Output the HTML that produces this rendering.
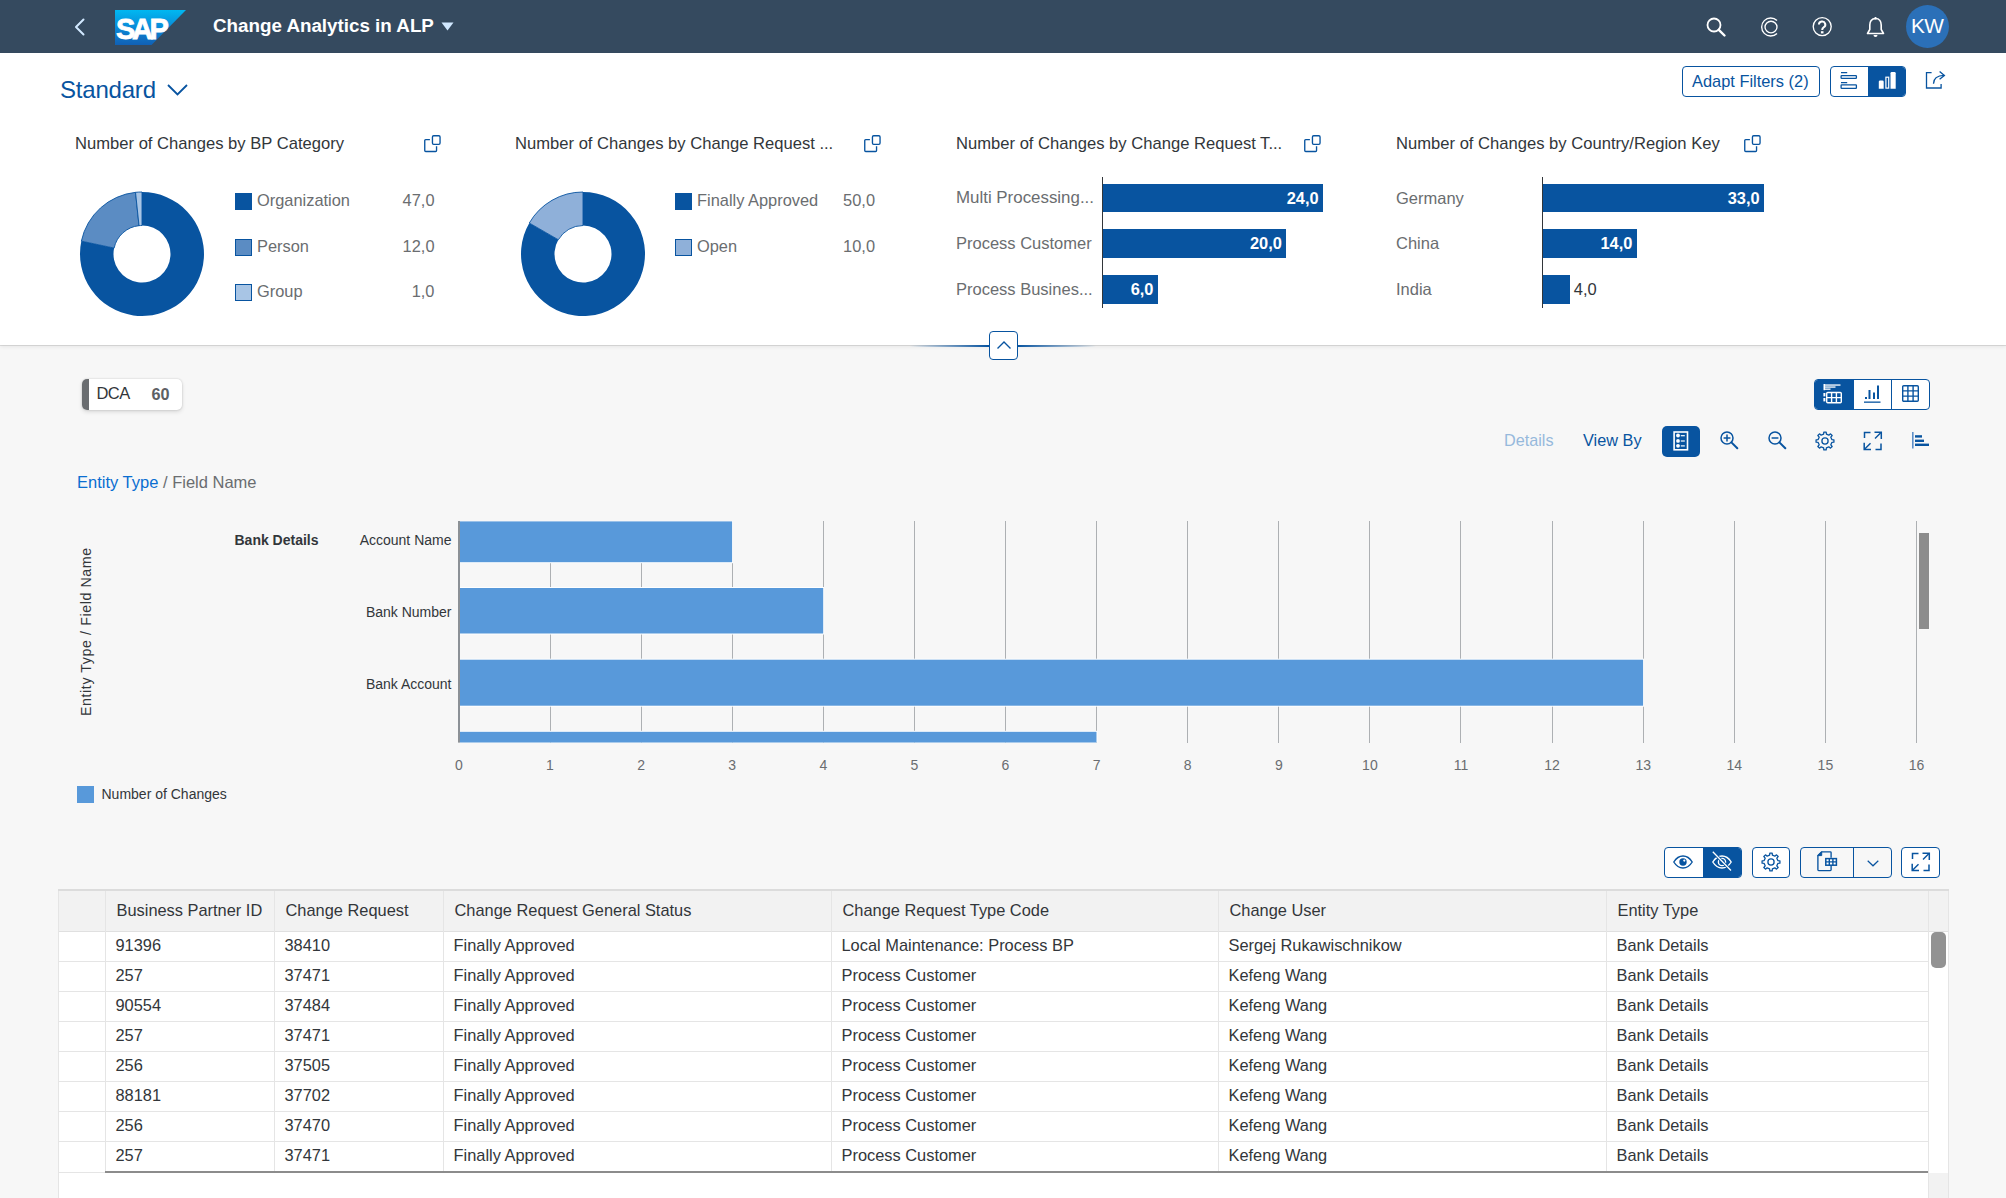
<!DOCTYPE html>
<html><head><meta charset="utf-8">
<style>
*{box-sizing:border-box;margin:0;padding:0}
html,body{width:2006px;height:1198px;overflow:hidden;background:#f7f7f7;font-family:"Liberation Sans",sans-serif;color:#32363a}
.a{position:absolute}
.t{position:absolute;white-space:nowrap;line-height:1}
#shell{left:0;top:0;width:2006px;height:53px;background:#354a5f}
#hdr{left:0;top:53px;width:2006px;height:292px;background:#fff;box-shadow:0 0.5px 0.5px rgba(0,0,0,0.1),0 2px 4px rgba(0,0,0,0.07)}
.btn{position:absolute;border:1px solid #0854a0;border-radius:4px;background:#fff}
.ttl{font-size:16.6px;color:#32363a}
.lg{font-size:16.4px;color:#6a6d70}
.sq{position:absolute;width:17px;height:17px;border:1px solid #0854a0}
.bl{font-size:16.5px;color:#6a6d70}
.bv{font-size:16.4px;color:#fff;font-weight:bold}
.ax{position:absolute;width:1px;background:#32363a}
.bar{position:absolute;background:#0854a0}
svg{position:absolute;overflow:visible}
</style></head><body>
<!-- SHELL BAR -->
<div id="shell" class="a">
  <svg style="left:74px;top:18px" width="11" height="18" viewBox="0 0 11 18"><path d="M9.5 1.5 L2 9 L9.5 16.5" fill="none" stroke="#d1e8ff" stroke-width="2" stroke-linecap="round" stroke-linejoin="round"/></svg>
  <svg style="left:115px;top:10px" width="72" height="36" viewBox="0 0 72 36">
    <defs><linearGradient id="sapg" x1="0" y1="0" x2="0" y2="1"><stop offset="0" stop-color="#00b8f1"/><stop offset="0.5" stop-color="#0a8ad8"/><stop offset="1" stop-color="#1160b4"/></linearGradient></defs>
    <path d="M0 0 H71 L36.5 35 H0 Z" fill="url(#sapg)"/>
    <text x="1" y="29.2" font-family="Liberation Sans" font-weight="bold" font-size="29" fill="#fff" stroke="#fff" stroke-width="0.8" letter-spacing="-3.4">SAP</text>
  </svg>
  <div class="t" style="left:213px;top:17px;font-size:18.8px;font-weight:bold;color:#fff">Change Analytics in ALP</div>
  <svg style="left:441px;top:22px" width="13" height="9" viewBox="0 0 13 9"><path d="M0.5 0.5 H12.5 L6.5 8.5 Z" fill="#d1e8ff"/></svg>
  <!-- search -->
  <svg style="left:1706px;top:17px" width="20" height="20" viewBox="0 0 20 20"><circle cx="8" cy="8" r="6.5" fill="none" stroke="#fff" stroke-width="1.8"/><path d="M12.8 12.8 L18.5 18.5" stroke="#fff" stroke-width="2.4" stroke-linecap="round"/></svg>
  <!-- copilot-like -->
  <svg style="left:1760px;top:17px" width="20" height="20" viewBox="0 0 20 20"><path d="M17 3.6 A9 9 0 1 0 17 16.4" fill="none" stroke="#fff" stroke-width="1.35"/><ellipse cx="11" cy="10" rx="6" ry="5.8" fill="none" stroke="#fff" stroke-width="1.35"/></svg>
  <!-- help -->
  <svg style="left:1812px;top:17px" width="20" height="20" viewBox="0 0 20 20"><circle cx="10.2" cy="9.6" r="9" fill="none" stroke="#fff" stroke-width="1.35"/><path d="M6.9 7.6 A3.2 3.1 0 1 1 11.6 10.4 C10.6 11 10.2 11.5 10.2 13" fill="none" stroke="#fff" stroke-width="2"/><rect x="8.9" y="14.2" width="2.6" height="2.2" fill="#fff"/></svg>
  <!-- bell -->
  <svg style="left:1866px;top:17px" width="19" height="21" viewBox="0 0 19 21"><path d="M9.5 1.5 C5.5 1.5 3.8 4.5 3.8 8 V12.5 L1.5 16.5 H17.5 L15.2 12.5 V8 C15.2 4.5 13.5 1.5 9.5 1.5 Z" fill="none" stroke="#fff" stroke-width="1.6" stroke-linejoin="round"/><path d="M7.5 18 A2 2 0 0 0 11.5 18 Z" fill="#fff"/><rect x="8.6" y="0" width="1.8" height="2.5" fill="#fff"/></svg>
  <div class="a" style="left:1906px;top:5px;width:43px;height:43px;border-radius:50%;background:#2b70b8"></div>
  <div class="t" style="left:1911px;top:16.4px;font-size:20.8px;color:#fff;letter-spacing:-0.7px">KW</div>
</div>

<!-- HEADER -->
<div id="hdr" class="a"></div>
<div class="t" style="left:60px;top:77.6px;font-size:24px;letter-spacing:-0.2px;color:#0854a0">Standard</div>
<svg style="left:167px;top:84px" width="21" height="12" viewBox="0 0 21 12"><path d="M1 1 L10.5 10.5 L20 1" fill="none" stroke="#0854a0" stroke-width="1.8"/></svg>
<div class="btn" style="left:1682px;top:66px;width:138px;height:31px"></div>
<div class="t" style="left:1692px;top:73px;font-size:16.4px;color:#0854a0">Adapt Filters (2)</div>
<div class="btn" style="left:1830px;top:66px;width:76px;height:31px;overflow:hidden"><div class="a" style="left:37px;top:0;width:39px;height:31px;background:#0854a0"></div></div>
<svg style="left:1836px;top:68px" width="24" height="24" viewBox="1836 68 24 24"><g fill="none" stroke="#0854a0" stroke-width="1.3"><path d="M1841 72.6 H1847.2 M1841 82.6 H1847.2"/><rect x="1841.1" y="75.6" width="15.3" height="2.7" rx="0.6"/><rect x="1841.1" y="84.9" width="15.3" height="3.4" rx="0.6"/></g></svg>
<svg style="left:1874px;top:68px" width="26" height="24" viewBox="1874 68 26 24"><g fill="#fff"><path d="M1878.8 88.7 V81.8 Q1878.8 80.5 1880.1 80.5 H1882.4 Q1883.7 80.5 1883.7 81.8 V88.7 Z"/><path d="M1890.5 88.7 V73.2 Q1890.5 72 1891.7 72 H1894.5 Q1895.7 72 1895.7 73.2 V88.7 Z"/></g><rect x="1885.9" y="77.2" width="2.8" height="10.9" fill="none" stroke="#fff" stroke-width="1.2"/></svg>
<svg style="left:1922px;top:68px" width="26" height="24" viewBox="1922 68 26 24"><g fill="none" stroke="#0854a0" stroke-width="1.3"><path d="M1931.6 72.7 H1926.5 V88 H1941.1 V84"/><path d="M1933.5 83.8 C1933.5 78.5 1937 75.6 1944.2 75.4"/><path d="M1939.6 71.5 L1944.4 75.4 L1939.6 79.2"/></g></svg>

<!-- CHART CARDS -->
<div class="t ttl" style="left:75px;top:135.6px;">Number of Changes by BP Category</div>
<svg style="left:424px;top:135px" width="17" height="17" viewBox="0 0 17 17"><path d="M5.9 4.6 H1.7 Q0.75 4.6 0.75 5.6 V15.6 Q0.75 16.5 1.7 16.5 H11.6 Q12.55 16.5 12.55 15.6 V11.2" fill="none" stroke="#0854a0" stroke-width="1.35"/><rect x="8.45" y="0.7" width="7.6" height="8.6" rx="1.2" fill="none" stroke="#0854a0" stroke-width="1.35"/></svg>
<div class="t ttl" style="left:515px;top:135.6px;">Number of Changes by Change Request ...</div>
<svg style="left:864px;top:135px" width="17" height="17" viewBox="0 0 17 17"><path d="M5.9 4.6 H1.7 Q0.75 4.6 0.75 5.6 V15.6 Q0.75 16.5 1.7 16.5 H11.6 Q12.55 16.5 12.55 15.6 V11.2" fill="none" stroke="#0854a0" stroke-width="1.35"/><rect x="8.45" y="0.7" width="7.6" height="8.6" rx="1.2" fill="none" stroke="#0854a0" stroke-width="1.35"/></svg>
<div class="t ttl" style="left:956px;top:135.6px;">Number of Changes by Change Request T...</div>
<svg style="left:1304px;top:135px" width="17" height="17" viewBox="0 0 17 17"><path d="M5.9 4.6 H1.7 Q0.75 4.6 0.75 5.6 V15.6 Q0.75 16.5 1.7 16.5 H11.6 Q12.55 16.5 12.55 15.6 V11.2" fill="none" stroke="#0854a0" stroke-width="1.35"/><rect x="8.45" y="0.7" width="7.6" height="8.6" rx="1.2" fill="none" stroke="#0854a0" stroke-width="1.35"/></svg>
<div class="t ttl" style="left:1396px;top:135.6px;">Number of Changes by Country/Region Key</div>
<svg style="left:1744px;top:135px" width="17" height="17" viewBox="0 0 17 17"><path d="M5.9 4.6 H1.7 Q0.75 4.6 0.75 5.6 V15.6 Q0.75 16.5 1.7 16.5 H11.6 Q12.55 16.5 12.55 15.6 V11.2" fill="none" stroke="#0854a0" stroke-width="1.35"/><rect x="8.45" y="0.7" width="7.6" height="8.6" rx="1.2" fill="none" stroke="#0854a0" stroke-width="1.35"/></svg>
<svg style="left:78px;top:190px" width="128" height="128" viewBox="0 0 128 128"><path d="M64.00 2.00 A62 62 0 1 1 3.35 51.11 L36.12 58.07 A28.5 28.5 0 1 0 64.00 35.50 Z" fill="#0854a0"/><path d="M3.35 51.11 A62 62 0 0 1 57.52 2.34 L61.02 35.66 A28.5 28.5 0 0 0 36.12 58.07 Z" fill="#5b8cc3" stroke="#0854a0" stroke-width="0.9"/><path d="M57.52 2.34 A62 62 0 0 1 64.00 2.00 L64.00 35.50 A28.5 28.5 0 0 0 61.02 35.66 Z" fill="#a8c5e5" stroke="#0854a0" stroke-width="0.9"/></svg>
<svg style="left:519px;top:190px" width="128" height="128" viewBox="0 0 128 128"><path d="M64.00 2.00 A62 62 0 1 1 10.31 33.00 L39.32 49.75 A28.5 28.5 0 1 0 64.00 35.50 Z" fill="#0854a0"/><path d="M10.31 33.00 A62 62 0 0 1 64.00 2.00 L64.00 35.50 A28.5 28.5 0 0 0 39.32 49.75 Z" fill="#8fb0d9" stroke="#0854a0" stroke-width="0.9"/></svg>
<div class="sq" style="left:235px;top:193.0px;background:#0854a0"></div>
<div class="t lg" style="left:257px;top:192.0px;">Organization</div>
<div class="t lg" style="right:1571.5px;top:192.0px;">47,0</div>
<div class="sq" style="left:235px;top:238.5px;background:#5b8cc3"></div>
<div class="t lg" style="left:257px;top:237.5px;">Person</div>
<div class="t lg" style="right:1571.5px;top:237.5px;">12,0</div>
<div class="sq" style="left:235px;top:284.0px;background:#a8c5e5"></div>
<div class="t lg" style="left:257px;top:283.0px;">Group</div>
<div class="t lg" style="right:1571.5px;top:283.0px;">1,0</div>
<div class="sq" style="left:675px;top:193.0px;background:#0854a0"></div>
<div class="t lg" style="left:697px;top:192.0px;">Finally Approved</div>
<div class="t lg" style="right:1131px;top:192.0px;">50,0</div>
<div class="sq" style="left:675px;top:238.5px;background:#8fb0d9"></div>
<div class="t lg" style="left:697px;top:237.5px;">Open</div>
<div class="t lg" style="right:1131px;top:237.5px;">10,0</div>
<div class="ax" style="left:1102px;top:177px;height:131px"></div>
<div class="bar" style="left:1103px;top:184.0px;width:220.1px;height:27.5px"></div>
<div class="t bl" style="left:956px;top:189.5px;font-size:16.9px">Multi Processing...</div>
<div class="t bv" style="right:687.4000000000001px;top:190.3px;">24,0</div>
<div class="bar" style="left:1103px;top:229.0px;width:183.4px;height:28.5px"></div>
<div class="t bl" style="left:956px;top:234.5px;">Process Customer</div>
<div class="t bv" style="right:724.0999999999999px;top:235.3px;">20,0</div>
<div class="bar" style="left:1103px;top:275.0px;width:55.0px;height:28.5px"></div>
<div class="t bl" style="left:956px;top:280.5px;">Process Busines...</div>
<div class="t bv" style="right:852.5px;top:281.3px;">6,0</div>
<div class="ax" style="left:1542px;top:177px;height:131px"></div>
<div class="bar" style="left:1543px;top:184.0px;width:221.1px;height:27.5px"></div>
<div class="t bl" style="left:1396px;top:189.5px;">Germany</div>
<div class="t bv" style="right:246.4000000000001px;top:190.3px;">33,0</div>
<div class="bar" style="left:1543px;top:229.0px;width:93.8px;height:28.5px"></div>
<div class="t bl" style="left:1396px;top:234.5px;">China</div>
<div class="t bv" style="right:373.70000000000005px;top:235.3px;">14,0</div>
<div class="bar" style="left:1543px;top:275.0px;width:26.8px;height:28.5px"></div>
<div class="t bl" style="left:1396px;top:280.5px;">India</div>
<div class="t bl" style="left:1573.8px;top:281.3px;color:#32363a">4,0</div>

<!-- COLLAPSE BAR -->
<div class="a" style="left:910px;top:344.5px;width:186px;height:2px;background:linear-gradient(90deg,rgba(8,84,160,0),#0854a0 42%,#0854a0 58%,rgba(8,84,160,0))"></div>
<div class="btn" style="left:989px;top:331px;width:29px;height:29px"></div>
<svg style="left:996px;top:340px" width="16" height="10" viewBox="0 0 16 10"><path d="M1.5 8.5 L8 2 L14.5 8.5" fill="none" stroke="#0854a0" stroke-width="1.4"/></svg>

<div class="a" style="left:82px;top:379px;width:100px;height:31px;background:#fff;border-radius:5px;box-shadow:0 0 2px rgba(0,0,0,0.18),0 2px 4px rgba(0,0,0,0.12);overflow:hidden"><div class="a" style="left:0;top:0;width:7px;height:31px;background:#6a6d70"></div></div>
<div class="t" style="left:96.5px;top:385px;font-size:16.5px;letter-spacing:-0.6px;color:#32363a">DCA</div>
<div class="t" style="left:151.5px;top:386px;font-size:16.2px;font-weight:bold;color:#5d6064">60</div>
<div class="btn" style="left:1814px;top:379px;width:116px;height:31px;overflow:hidden"><div class="a" style="left:0;top:0;width:39px;height:31px;background:#0854a0"></div><div class="a" style="left:76px;top:0;width:1px;height:31px;background:#0854a0"></div></div>
<svg style="left:1823px;top:384px" width="20" height="20" viewBox="0 0 20 20"><g fill="#fff"><rect x="0.5" y="0" width="1.6" height="6.2"/><rect x="2" y="0.4" width="15.5" height="1.3"/><rect x="2" y="2.4" width="10.5" height="1.3"/><rect x="2" y="4.5" width="5.5" height="1.3"/></g><g fill="none" stroke="#fff" stroke-width="1.4"><rect x="3.7" y="8.5" width="14.6" height="10.3" rx="1"/><path d="M3.7 13.6 H18.3 M8.6 8.5 V18.8 M13.4 8.5 V18.8"/></g><rect x="0.4" y="9" width="2" height="3.4" fill="#fff"/><rect x="0.4" y="14" width="2" height="3.4" fill="#fff"/></svg>
<svg style="left:1864px;top:385px" width="17" height="18" viewBox="0 0 17 18"><g fill="#0854a0"><rect x="1" y="12" width="2" height="2"/><rect x="4.5" y="5" width="2" height="9"/><rect x="9" y="7.5" width="2" height="6.5"/><rect x="13" y="0.5" width="2" height="13.5"/><rect x="0" y="16.5" width="16.5" height="1.3"/></g></svg>
<svg style="left:1902px;top:385px" width="17" height="17" viewBox="0 0 17 17"><g fill="none" stroke="#0854a0" stroke-width="1.4"><rect x="0.7" y="0.7" width="15.6" height="15.6" rx="1"/><path d="M5.9 0.7 V16.3 M11.1 0.7 V16.3 M0.7 5.9 H16.3 M0.7 11.1 H16.3"/></g></svg>
<div class="t" style="left:1504px;top:431.5px;font-size:16.2px;color:#96b9dc">Details</div>
<div class="t" style="left:1583px;top:431.5px;font-size:16.3px;color:#0854a0">View By</div>
<div class="a" style="left:1662px;top:426px;width:38px;height:31px;background:#0854a0;border-radius:5px"></div>
<svg style="left:1673px;top:431px" width="16" height="20" viewBox="0 0 16 20"><rect x="1.1" y="1" width="13.4" height="17.8" fill="none" stroke="#fff" stroke-width="1.6"/><g fill="#fff"><circle cx="5" cy="4.5" r="1.9"/><circle cx="5" cy="9.9" r="1.9"/><circle cx="5" cy="14.8" r="1.9"/><rect x="7.8" y="4.1" width="4" height="1.2"/><rect x="7.8" y="9.4" width="4" height="1.2"/><rect x="7.8" y="14.3" width="4" height="1.2"/></g></svg>
<svg style="left:1720px;top:431px" width="19" height="19" viewBox="0 0 19 19"><circle cx="7" cy="7" r="6" fill="none" stroke="#0854a0" stroke-width="1.5"/><path d="M11.4 11.4 L17.3 17.3" stroke="#0854a0" stroke-width="2" stroke-linecap="round"/><path d="M3.6 7 H10.4 M7 3.6 V10.4" stroke="#0854a0" stroke-width="1.5"/></svg>
<svg style="left:1768px;top:431px" width="19" height="19" viewBox="0 0 19 19"><circle cx="7" cy="7" r="6" fill="none" stroke="#0854a0" stroke-width="1.5"/><path d="M11.4 11.4 L17.3 17.3" stroke="#0854a0" stroke-width="2" stroke-linecap="round"/><path d="M3.6 7 H10.4" stroke="#0854a0" stroke-width="1.5"/></svg>
<svg style="left:1815px;top:430.5px" width="20" height="20" viewBox="0 0 20 20"><path d="M8.61 3.14 L8.83 1.08 L11.17 1.08 L11.39 3.14 L13.87 4.17 L15.49 2.86 L17.14 4.51 L15.83 6.13 L16.86 8.61 L18.92 8.83 L18.92 11.17 L16.86 11.39 L15.83 13.87 L17.14 15.49 L15.49 17.14 L13.87 15.83 L11.39 16.86 L11.17 18.92 L8.83 18.92 L8.61 16.86 L6.13 15.83 L4.51 17.14 L2.86 15.49 L4.17 13.87 L3.14 11.39 L1.08 11.17 L1.08 8.83 L3.14 8.61 L4.17 6.13 L2.86 4.51 L4.51 2.86 L6.13 4.17 Z" fill="none" stroke="#0854a0" stroke-width="1.3" stroke-linejoin="round"/><circle cx="10" cy="10" r="3.1" fill="none" stroke="#0854a0" stroke-width="1.3"/></svg>
<svg style="left:1862.5px;top:430.5px" width="20" height="20" viewBox="0 0 20 20"><g fill="none" stroke="#0854a0" stroke-width="1.5"><path d="M1.5 7 V1.5 H7.5"/><path d="M12.5 18.5 H18 V12.5"/><path d="M11.5 1.2 H18.3 V8"/><path d="M18 1.5 L12 7.5"/><path d="M8 18.5 H1.2 V11.7"/><path d="M1.5 18.2 L7.5 12.2"/></g></svg>
<svg style="left:1912px;top:432px" width="18" height="17" viewBox="0 0 18 17"><rect x="0" y="0" width="1.6" height="16.5" fill="#5d8fc8"/><g fill="#0854a0"><rect x="3" y="3.2" width="7" height="2.4"/><rect x="3" y="7.6" width="9" height="2.4"/><rect x="3" y="11.6" width="14" height="2.4"/></g></svg>
<div class="t" style="left:77px;top:474px;font-size:16.5px;color:#0a6ed1">Entity Type</div>
<div class="t" style="left:163px;top:474px;font-size:16.5px;color:#6a6d70">/ Field Name</div>
<svg style="left:0;top:0" width="2006" height="800" viewBox="0 0 2006 800"><rect x="550" y="521" width="1" height="221.6" fill="#adb0b3" shape-rendering="crispEdges"/><rect x="641" y="521" width="1" height="221.6" fill="#adb0b3" shape-rendering="crispEdges"/><rect x="732" y="521" width="1" height="221.6" fill="#adb0b3" shape-rendering="crispEdges"/><rect x="823" y="521" width="1" height="221.6" fill="#adb0b3" shape-rendering="crispEdges"/><rect x="914" y="521" width="1" height="221.6" fill="#adb0b3" shape-rendering="crispEdges"/><rect x="1005" y="521" width="1" height="221.6" fill="#adb0b3" shape-rendering="crispEdges"/><rect x="1096" y="521" width="1" height="221.6" fill="#adb0b3" shape-rendering="crispEdges"/><rect x="1187" y="521" width="1" height="221.6" fill="#adb0b3" shape-rendering="crispEdges"/><rect x="1278" y="521" width="1" height="221.6" fill="#adb0b3" shape-rendering="crispEdges"/><rect x="1369" y="521" width="1" height="221.6" fill="#adb0b3" shape-rendering="crispEdges"/><rect x="1460" y="521" width="1" height="221.6" fill="#adb0b3" shape-rendering="crispEdges"/><rect x="1552" y="521" width="1" height="221.6" fill="#adb0b3" shape-rendering="crispEdges"/><rect x="1643" y="521" width="1" height="221.6" fill="#adb0b3" shape-rendering="crispEdges"/><rect x="1734" y="521" width="1" height="221.6" fill="#adb0b3" shape-rendering="crispEdges"/><rect x="1825" y="521" width="1" height="221.6" fill="#adb0b3" shape-rendering="crispEdges"/><rect x="1916" y="521" width="1" height="221.6" fill="#adb0b3" shape-rendering="crispEdges"/><rect x="460" y="521.0" width="273.1" height="42.2" fill="#fff"/><rect x="460" y="521.4" width="272.1" height="40.8" fill="#5899da"/><rect x="460" y="587.0" width="364.2" height="47.5" fill="#fff"/><rect x="460" y="588.0" width="363.2" height="45.5" fill="#5899da"/><rect x="460" y="658.7" width="1184.1" height="48.0" fill="#fff"/><rect x="460" y="659.7" width="1183.1" height="46.0" fill="#5899da"/><rect x="460" y="730.8" width="637.5" height="11.8" fill="#fff"/><rect x="460" y="731.8" width="636.5" height="10.7" fill="#5899da"/><rect x="458" y="521" width="2" height="221.6" fill="#8c9196"/></svg>
<div class="t" style="left:408.9px;width:100px;text-align:center;top:758px;font-size:14px;color:#6a6d70">0</div>
<div class="t" style="left:500.0px;width:100px;text-align:center;top:758px;font-size:14px;color:#6a6d70">1</div>
<div class="t" style="left:591.1px;width:100px;text-align:center;top:758px;font-size:14px;color:#6a6d70">2</div>
<div class="t" style="left:682.2px;width:100px;text-align:center;top:758px;font-size:14px;color:#6a6d70">3</div>
<div class="t" style="left:773.3px;width:100px;text-align:center;top:758px;font-size:14px;color:#6a6d70">4</div>
<div class="t" style="left:864.4px;width:100px;text-align:center;top:758px;font-size:14px;color:#6a6d70">5</div>
<div class="t" style="left:955.5px;width:100px;text-align:center;top:758px;font-size:14px;color:#6a6d70">6</div>
<div class="t" style="left:1046.6px;width:100px;text-align:center;top:758px;font-size:14px;color:#6a6d70">7</div>
<div class="t" style="left:1137.7px;width:100px;text-align:center;top:758px;font-size:14px;color:#6a6d70">8</div>
<div class="t" style="left:1228.8px;width:100px;text-align:center;top:758px;font-size:14px;color:#6a6d70">9</div>
<div class="t" style="left:1319.9px;width:100px;text-align:center;top:758px;font-size:14px;color:#6a6d70">10</div>
<div class="t" style="left:1411.0px;width:100px;text-align:center;top:758px;font-size:14px;color:#6a6d70">11</div>
<div class="t" style="left:1502.1px;width:100px;text-align:center;top:758px;font-size:14px;color:#6a6d70">12</div>
<div class="t" style="left:1593.2px;width:100px;text-align:center;top:758px;font-size:14px;color:#6a6d70">13</div>
<div class="t" style="left:1684.3px;width:100px;text-align:center;top:758px;font-size:14px;color:#6a6d70">14</div>
<div class="t" style="left:1775.4px;width:100px;text-align:center;top:758px;font-size:14px;color:#6a6d70">15</div>
<div class="t" style="left:1866.5px;width:100px;text-align:center;top:758px;font-size:14px;color:#6a6d70">16</div>
<div class="a" style="left:1919px;top:532.5px;width:10px;height:96.5px;background:#8c8c8c"></div>
<div class="t" style="left:234.5px;top:533px;font-size:14px;font-weight:bold;color:#32363a">Bank Details</div>
<div class="t" style="right:1554.5px;top:533px;font-size:14px;color:#32363a">Account Name</div>
<div class="t" style="right:1554.5px;top:605px;font-size:14px;color:#32363a">Bank Number</div>
<div class="t" style="right:1554.5px;top:677.3px;font-size:14px;color:#32363a">Bank Account</div>
<div class="t" style="left:90.5px;top:716px;font-size:14.2px;letter-spacing:0.6px;color:#32363a;transform-origin:0 0;transform:rotate(-90deg) translateY(-12.2px)">Entity Type / Field Name</div>
<div class="a" style="left:77px;top:786px;width:17px;height:17px;background:#5899da"></div>
<div class="t" style="left:101.5px;top:786.5px;font-size:14px;color:#32363a">Number of Changes</div>
<div class="btn" style="left:1664px;top:847px;width:78px;height:31px;overflow:hidden"><div class="a" style="left:37.5px;top:0;width:41px;height:31px;background:#0854a0"></div></div>
<svg style="left:1673px;top:853px" width="20" height="18" viewBox="0 0 20 18"><path d="M0.8 9 C3.5 4.6 6.6 3 10 3 C13.4 3 16.5 4.6 19.2 9 C16.5 13.4 13.4 15 10 15 C6.6 15 3.5 13.4 0.8 9 Z" fill="none" stroke="#0854a0" stroke-width="1.4"/><circle cx="10" cy="9" r="3.7" fill="#0854a0"/><circle cx="11.3" cy="7.6" r="1.1" fill="#fff"/></svg>
<svg style="left:1712px;top:851px" width="20" height="22" viewBox="0 0 20 22"><path d="M0.8 11 C3.5 6.6 6.6 5 10 5 C13.4 5 16.5 6.6 19.2 11 C16.5 15.4 13.4 17 10 17 C6.6 17 3.5 15.4 0.8 11 Z" fill="none" stroke="#fff" stroke-width="1.4"/><circle cx="10" cy="11" r="3.6" fill="none" stroke="#fff" stroke-width="1.4"/><path d="M0.8 0.8 L19 19.5" stroke="#0854a0" stroke-width="3"/><path d="M0.8 0.8 L19 19.5" stroke="#fff" stroke-width="1.3"/></svg>
<div class="btn" style="left:1752px;top:847px;width:38px;height:31px"></div>
<svg style="left:1760.5px;top:852px" width="20" height="20" viewBox="0 0 20 20"><path d="M8.61 3.14 L8.83 1.08 L11.17 1.08 L11.39 3.14 L13.87 4.17 L15.49 2.86 L17.14 4.51 L15.83 6.13 L16.86 8.61 L18.92 8.83 L18.92 11.17 L16.86 11.39 L15.83 13.87 L17.14 15.49 L15.49 17.14 L13.87 15.83 L11.39 16.86 L11.17 18.92 L8.83 18.92 L8.61 16.86 L6.13 15.83 L4.51 17.14 L2.86 15.49 L4.17 13.87 L3.14 11.39 L1.08 11.17 L1.08 8.83 L3.14 8.61 L4.17 6.13 L2.86 4.51 L4.51 2.86 L6.13 4.17 Z" fill="none" stroke="#0854a0" stroke-width="1.3" stroke-linejoin="round"/><circle cx="10" cy="10" r="3.1" fill="none" stroke="#0854a0" stroke-width="1.3"/></svg>
<div class="btn" style="left:1800px;top:847px;width:92px;height:31px;background:#f7f7f7"><div class="a" style="left:51.5px;top:0;width:1px;height:29px;background:#0854a0"></div></div>
<svg style="left:1817px;top:851px" width="21" height="21" viewBox="0 0 21 21"><path d="M14.1 6.8 V1.6 Q14.1 0.8 13.3 0.8 H4.6 L0.9 4.5 V18.8 Q0.9 19.6 1.7 19.6 H13.3 Q14.1 19.6 14.1 18.8 V14.6" fill="none" stroke="#0854a0" stroke-width="1.35"/><path d="M0.9 4.6 L4.7 0.8 V4.6 Z" fill="#0854a0" stroke="#0854a0" stroke-width="1"/><rect x="8.8" y="7.6" width="10.6" height="6.6" fill="#fff" stroke="#0854a0" stroke-width="1.5"/><path d="M8.8 10.9 H19.4 M12.3 7.6 V14.2 M15.9 7.6 V14.2" stroke="#0854a0" stroke-width="1.4"/></svg>
<svg style="left:1866.5px;top:859.5px" width="12" height="7" viewBox="0 0 12 7"><path d="M0.7 0.7 L6 5.8 L11.3 0.7" fill="none" stroke="#0854a0" stroke-width="1.2"/></svg>
<div class="btn" style="left:1901px;top:847px;width:39px;height:31px"></div>
<svg style="left:1910.5px;top:851.5px" width="20" height="20" viewBox="0 0 20 20"><g fill="none" stroke="#0854a0" stroke-width="1.5"><path d="M1.5 7 V1.5 H7.5"/><path d="M12.5 18.5 H18 V12.5"/><path d="M11.5 1.2 H18.3 V8"/><path d="M18 1.5 L12 7.5"/><path d="M8 18.5 H1.2 V11.7"/><path d="M1.5 18.2 L7.5 12.2"/></g></svg>
<div class="a" style="left:58px;top:889px;width:1891px;height:309px;background:#fff;border:1px solid #e5e5e5;border-bottom:none"></div>
<div class="a" style="left:58px;top:889px;width:1891px;height:2px;background:#dcdcdc"></div>
<div class="a" style="left:59px;top:891px;width:1889px;height:41px;background:#f2f2f2;border-bottom:1px solid #e0e0e0"></div>
<div class="a" style="left:1929px;top:1173px;width:19px;height:25px;background:#f2f2f2"></div>
<div class="a" style="left:59px;top:961.4px;width:1869px;height:1px;background:#e5e5e5"></div>
<div class="a" style="left:59px;top:991.4px;width:1869px;height:1px;background:#e5e5e5"></div>
<div class="a" style="left:59px;top:1021.4px;width:1869px;height:1px;background:#e5e5e5"></div>
<div class="a" style="left:59px;top:1051.4px;width:1869px;height:1px;background:#e5e5e5"></div>
<div class="a" style="left:59px;top:1081.4px;width:1869px;height:1px;background:#e5e5e5"></div>
<div class="a" style="left:59px;top:1111.4px;width:1869px;height:1px;background:#e5e5e5"></div>
<div class="a" style="left:59px;top:1141.4px;width:1869px;height:1px;background:#e5e5e5"></div>
<div class="a" style="left:59px;top:1171.5px;width:46px;height:1px;background:#e5e5e5"></div>
<div class="a" style="left:105px;top:1171px;width:1823px;height:2px;background:#8c8c8c"></div>
<div class="a" style="left:105px;top:891px;width:1px;height:280px;background:#e5e5e5"></div>
<div class="a" style="left:274px;top:891px;width:1px;height:280px;background:#e5e5e5"></div>
<div class="a" style="left:443px;top:891px;width:1px;height:280px;background:#e5e5e5"></div>
<div class="a" style="left:831px;top:891px;width:1px;height:280px;background:#e5e5e5"></div>
<div class="a" style="left:1218px;top:891px;width:1px;height:280px;background:#e5e5e5"></div>
<div class="a" style="left:1606px;top:891px;width:1px;height:280px;background:#e5e5e5"></div>
<div class="a" style="left:1928px;top:891px;width:1px;height:280px;background:#e5e5e5"></div>
<div class="a" style="left:1928px;top:891px;width:1px;height:307px;background:#e5e5e5"></div>
<div class="a" style="left:1931px;top:932px;width:15px;height:36px;background:#929292;border-radius:5px"></div>
<div class="t" style="left:116.5px;top:902.2px;font-size:16.4px;color:#32363a">Business Partner ID</div>
<div class="t" style="left:285.5px;top:902.2px;font-size:16.4px;color:#32363a">Change Request</div>
<div class="t" style="left:454.5px;top:902.2px;font-size:16.4px;color:#32363a">Change Request General Status</div>
<div class="t" style="left:842.5px;top:902.2px;font-size:16.4px;color:#32363a">Change Request Type Code</div>
<div class="t" style="left:1229.5px;top:902.2px;font-size:16.4px;color:#32363a">Change User</div>
<div class="t" style="left:1617.5px;top:902.2px;font-size:16.4px;color:#32363a">Entity Type</div>
<div class="t" style="left:115.5px;top:936.9px;font-size:16.4px;color:#32363a">91396</div>
<div class="t" style="left:284.5px;top:936.9px;font-size:16.4px;color:#32363a">38410</div>
<div class="t" style="left:453.5px;top:936.9px;font-size:16.4px;color:#32363a">Finally Approved</div>
<div class="t" style="left:841.5px;top:936.9px;font-size:16.4px;color:#32363a">Local Maintenance: Process BP</div>
<div class="t" style="left:1228.5px;top:936.9px;font-size:16.4px;color:#32363a">Sergej Rukawischnikow</div>
<div class="t" style="left:1616.5px;top:936.9px;font-size:16.4px;color:#32363a">Bank Details</div>
<div class="t" style="left:115.5px;top:966.9px;font-size:16.4px;color:#32363a">257</div>
<div class="t" style="left:284.5px;top:966.9px;font-size:16.4px;color:#32363a">37471</div>
<div class="t" style="left:453.5px;top:966.9px;font-size:16.4px;color:#32363a">Finally Approved</div>
<div class="t" style="left:841.5px;top:966.9px;font-size:16.4px;color:#32363a">Process Customer</div>
<div class="t" style="left:1228.5px;top:966.9px;font-size:16.4px;color:#32363a">Kefeng Wang</div>
<div class="t" style="left:1616.5px;top:966.9px;font-size:16.4px;color:#32363a">Bank Details</div>
<div class="t" style="left:115.5px;top:996.9px;font-size:16.4px;color:#32363a">90554</div>
<div class="t" style="left:284.5px;top:996.9px;font-size:16.4px;color:#32363a">37484</div>
<div class="t" style="left:453.5px;top:996.9px;font-size:16.4px;color:#32363a">Finally Approved</div>
<div class="t" style="left:841.5px;top:996.9px;font-size:16.4px;color:#32363a">Process Customer</div>
<div class="t" style="left:1228.5px;top:996.9px;font-size:16.4px;color:#32363a">Kefeng Wang</div>
<div class="t" style="left:1616.5px;top:996.9px;font-size:16.4px;color:#32363a">Bank Details</div>
<div class="t" style="left:115.5px;top:1026.9px;font-size:16.4px;color:#32363a">257</div>
<div class="t" style="left:284.5px;top:1026.9px;font-size:16.4px;color:#32363a">37471</div>
<div class="t" style="left:453.5px;top:1026.9px;font-size:16.4px;color:#32363a">Finally Approved</div>
<div class="t" style="left:841.5px;top:1026.9px;font-size:16.4px;color:#32363a">Process Customer</div>
<div class="t" style="left:1228.5px;top:1026.9px;font-size:16.4px;color:#32363a">Kefeng Wang</div>
<div class="t" style="left:1616.5px;top:1026.9px;font-size:16.4px;color:#32363a">Bank Details</div>
<div class="t" style="left:115.5px;top:1056.9px;font-size:16.4px;color:#32363a">256</div>
<div class="t" style="left:284.5px;top:1056.9px;font-size:16.4px;color:#32363a">37505</div>
<div class="t" style="left:453.5px;top:1056.9px;font-size:16.4px;color:#32363a">Finally Approved</div>
<div class="t" style="left:841.5px;top:1056.9px;font-size:16.4px;color:#32363a">Process Customer</div>
<div class="t" style="left:1228.5px;top:1056.9px;font-size:16.4px;color:#32363a">Kefeng Wang</div>
<div class="t" style="left:1616.5px;top:1056.9px;font-size:16.4px;color:#32363a">Bank Details</div>
<div class="t" style="left:115.5px;top:1086.9px;font-size:16.4px;color:#32363a">88181</div>
<div class="t" style="left:284.5px;top:1086.9px;font-size:16.4px;color:#32363a">37702</div>
<div class="t" style="left:453.5px;top:1086.9px;font-size:16.4px;color:#32363a">Finally Approved</div>
<div class="t" style="left:841.5px;top:1086.9px;font-size:16.4px;color:#32363a">Process Customer</div>
<div class="t" style="left:1228.5px;top:1086.9px;font-size:16.4px;color:#32363a">Kefeng Wang</div>
<div class="t" style="left:1616.5px;top:1086.9px;font-size:16.4px;color:#32363a">Bank Details</div>
<div class="t" style="left:115.5px;top:1116.9px;font-size:16.4px;color:#32363a">256</div>
<div class="t" style="left:284.5px;top:1116.9px;font-size:16.4px;color:#32363a">37470</div>
<div class="t" style="left:453.5px;top:1116.9px;font-size:16.4px;color:#32363a">Finally Approved</div>
<div class="t" style="left:841.5px;top:1116.9px;font-size:16.4px;color:#32363a">Process Customer</div>
<div class="t" style="left:1228.5px;top:1116.9px;font-size:16.4px;color:#32363a">Kefeng Wang</div>
<div class="t" style="left:1616.5px;top:1116.9px;font-size:16.4px;color:#32363a">Bank Details</div>
<div class="t" style="left:115.5px;top:1146.9px;font-size:16.4px;color:#32363a">257</div>
<div class="t" style="left:284.5px;top:1146.9px;font-size:16.4px;color:#32363a">37471</div>
<div class="t" style="left:453.5px;top:1146.9px;font-size:16.4px;color:#32363a">Finally Approved</div>
<div class="t" style="left:841.5px;top:1146.9px;font-size:16.4px;color:#32363a">Process Customer</div>
<div class="t" style="left:1228.5px;top:1146.9px;font-size:16.4px;color:#32363a">Kefeng Wang</div>
<div class="t" style="left:1616.5px;top:1146.9px;font-size:16.4px;color:#32363a">Bank Details</div>
</body></html>
